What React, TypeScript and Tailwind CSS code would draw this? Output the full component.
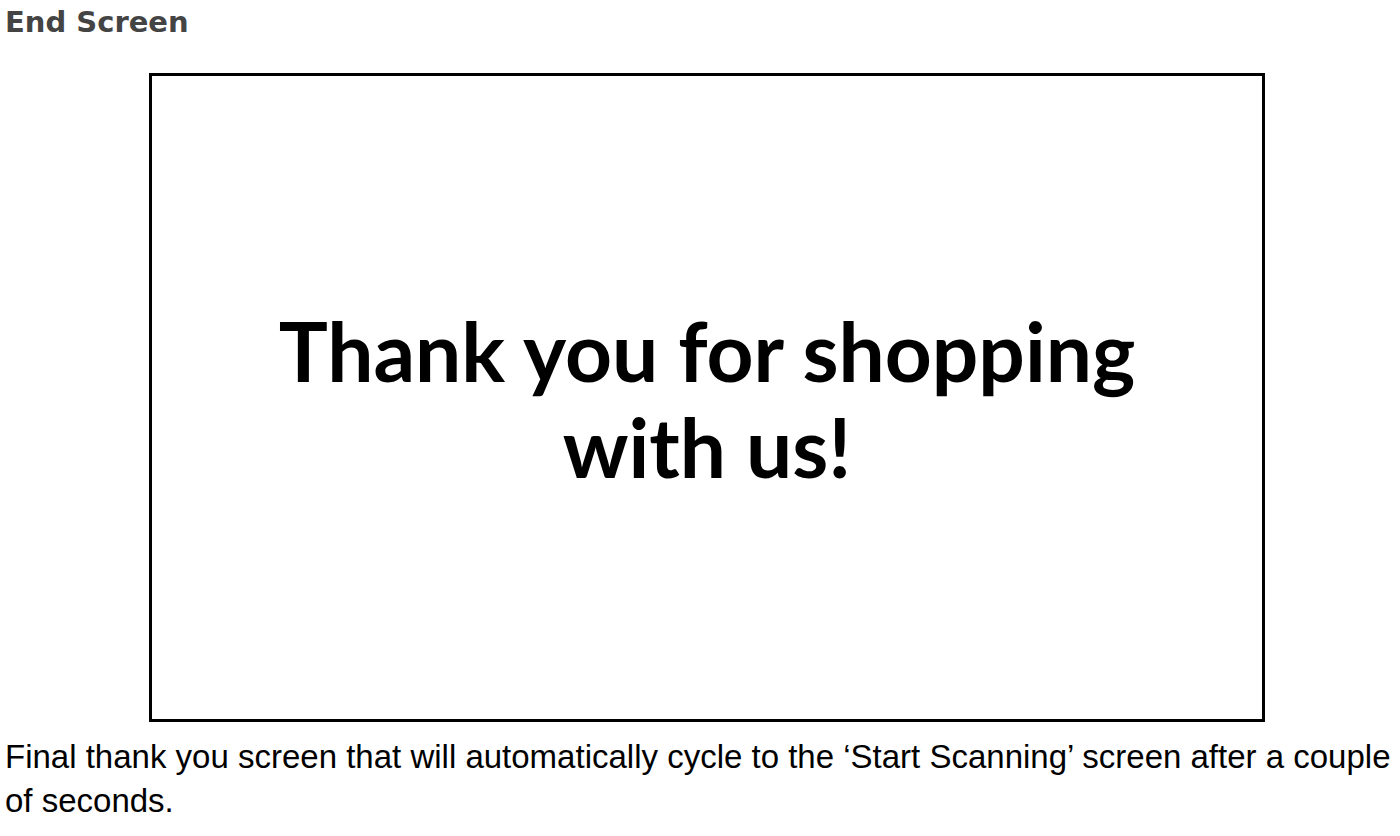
export default function App() {
	return (
		<div className="flex h-[836px] w-[1400px] flex-col overflow-hidden bg-white pl-[5px]">
			<h2 className="mt-[2px] text-[29px] leading-[40px] font-bold text-[#444444] [font-family:'DejaVu_Sans',sans-serif]">End Screen</h2>
			<div className="mt-[31px] ml-[144px] flex h-[649px] w-[1116px] items-center justify-center border-[3px] border-black">
				<p className="text-center text-[82px] leading-[96px] font-bold text-black [font-family:Lato,sans-serif]">
					Thank you for shopping
					<br />
					with us!
				</p>
			</div>
			<p className="mt-[13px] text-[33px] leading-[44px] whitespace-nowrap text-black [font-family:'Liberation_Sans',Arial,sans-serif]">
				Final thank you screen that will automatically cycle to the ‘Start Scanning’ screen after a couple
				<br />
				of seconds.
			</p>
		</div>
	);
}
